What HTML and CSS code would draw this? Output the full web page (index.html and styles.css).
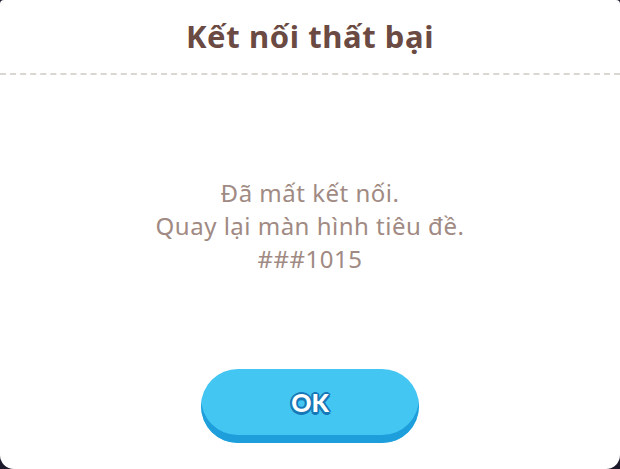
FILE: index.html
```html
<!DOCTYPE html>
<html lang="vi">
<head>
<meta charset="utf-8">
<title>Kết nối thất bại</title>
<link rel="stylesheet" href="styles.css">
</head>
<body>
<div class="dialog">
  <header class="dialog-head">
    <h1 class="dialog-title">Kết nối thất bại</h1>
  </header>
  <main class="dialog-body">
    <p class="message">Đã mất kết nối.<br>Quay lại màn hình tiêu đề.<br>###1015</p>
  </main>
  <footer class="dialog-foot">
    <button class="btn-ok" type="button"><span class="btn-label">OK</span></button>
  </footer>
</div>
</body>
</html>
```

FILE: styles.css
```css
html, body {
  margin: 0;
  height: 100%;
  background: #1d1a2c;
}

.dialog {
  box-sizing: border-box;
  height: 469px;
  width: 620px;
  background: #ffffff;
  border-radius: 4px 4px 14px 14px;
  display: flex;
  flex-direction: column;
  font-family: "Noto Sans", "Open Sans", sans-serif;
}

.dialog-head {
  height: 73px;
  border-bottom: 2px dashed #dad6d2;
  display: flex;
  align-items: center;
  justify-content: center;
}

.dialog-title {
  margin: 0;
  padding-bottom: 2px;
  font-size: 31px;
  font-weight: 700;
  letter-spacing: 0.6px;
  color: #6a4a42;
}

.dialog-body {
  flex: 1;
  display: flex;
  align-items: center;
  justify-content: center;
  padding-top: 6px;
}

.message {
  margin: 0;
  text-align: center;
  font-size: 24px;
  line-height: 33px;
  letter-spacing: 0.5px;
  color: #a08a83;
}

.dialog-foot {
  display: flex;
  justify-content: center;
  padding-bottom: 26px;
}

.btn-ok {
  width: 218px;
  height: 74px;
  border: none;
  padding: 0 0 8px;
  border-radius: 37px;
  background: #44c6f3;
  box-shadow: inset 0 -8px 0 #1e9fdc;
  display: flex;
  align-items: center;
  justify-content: center;
  cursor: pointer;
}

.btn-label {
  font-family: "Lato", sans-serif;
  font-weight: 900;
  font-size: 25px;
  color: #ffffff;
  text-shadow:
    2px 0 0 #1678b8, -2px 0 0 #1678b8, 0 2px 0 #1678b8, 0 -2px 0 #1678b8,
    1.5px 1.5px 0 #1678b8, -1.5px 1.5px 0 #1678b8, 1.5px -1.5px 0 #1678b8, -1.5px -1.5px 0 #1678b8,
    0 3px 0 #1678b8;
}
```
